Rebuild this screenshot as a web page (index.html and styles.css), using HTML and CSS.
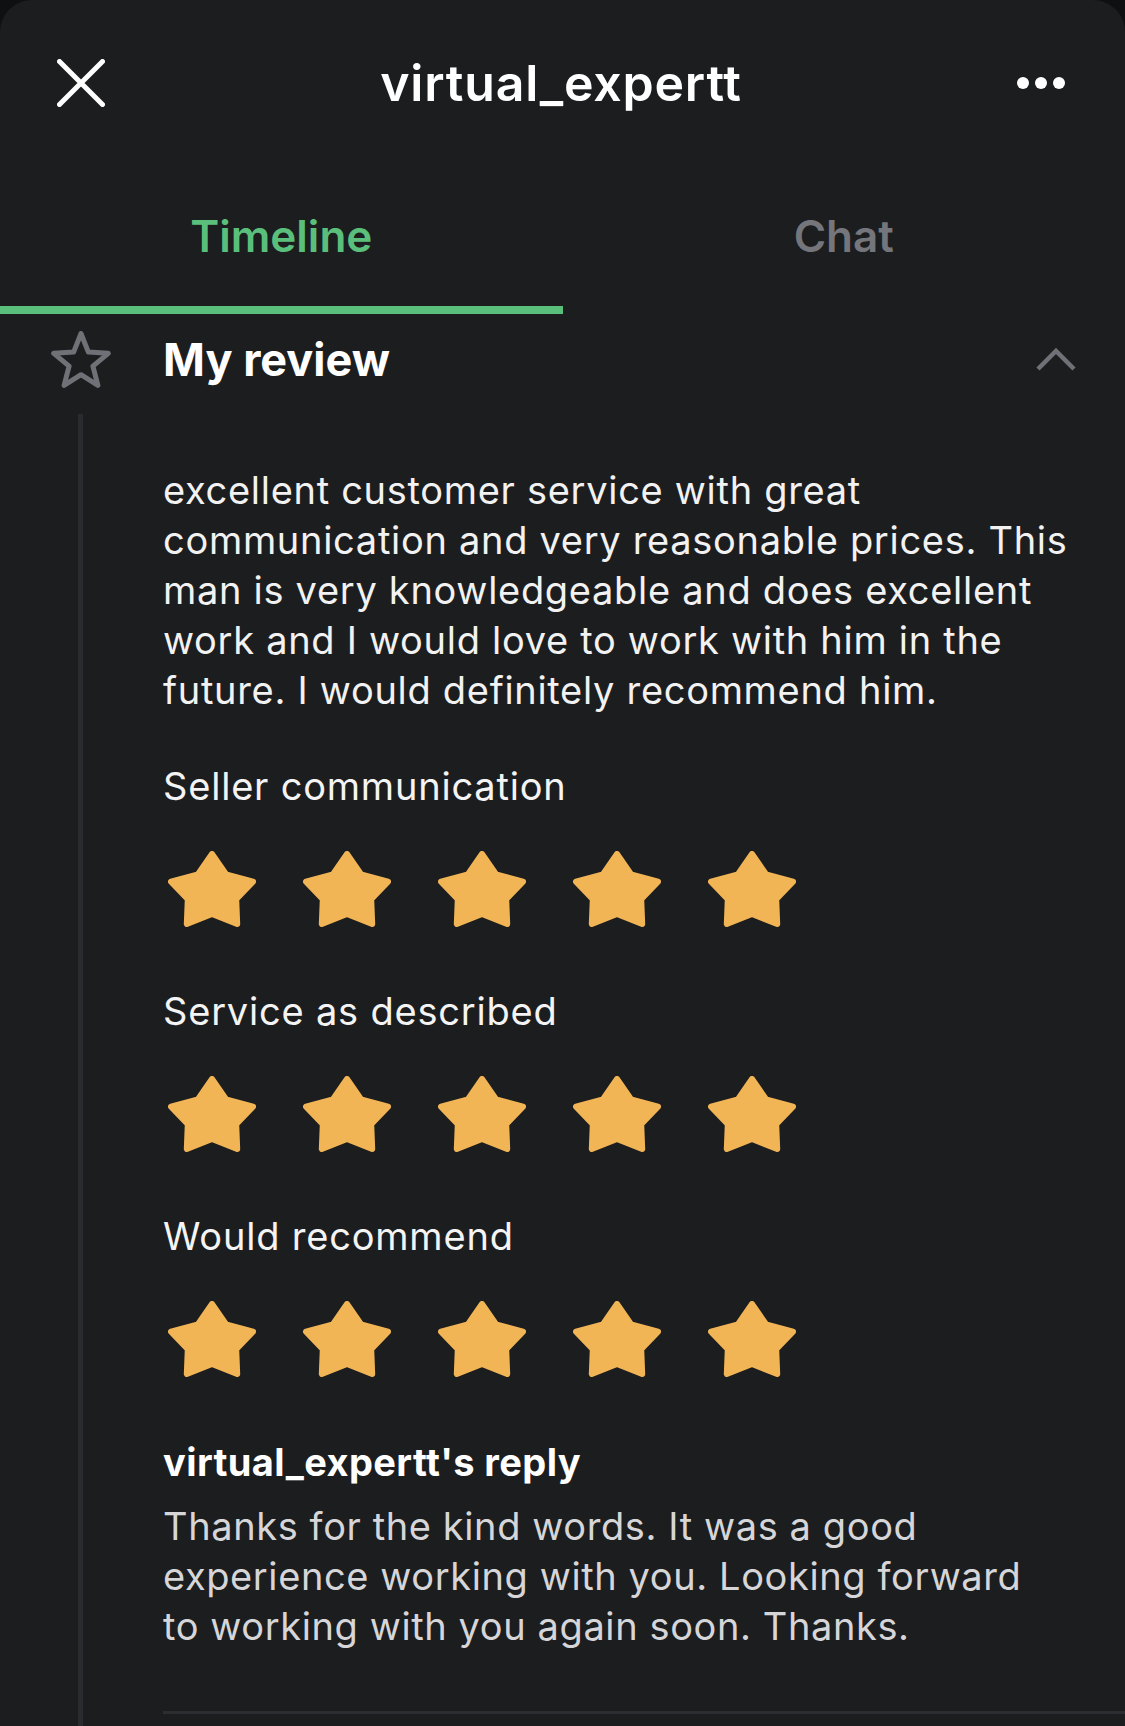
FILE: index.html
```html
<!DOCTYPE html>
<html lang="en">
<head>
<meta charset="utf-8">
<title>virtual_expertt</title>
<link rel="stylesheet" href="styles.css">
</head>
<body>
<div class="sheet">
  <header class="topbar">
    <div class="topbar-left">
      <svg class="icon-close" width="48" height="48" viewBox="0 0 48 48"><path d="M2.5 2.5 L45.5 45.5 M45.5 2.5 L2.5 45.5" stroke="#fff" stroke-width="5" stroke-linecap="round" fill="none"/></svg>
    </div>
    <h1 class="title">virtual_expertt</h1>
    <div class="topbar-right">
      <span class="dot"></span><span class="dot"></span><span class="dot"></span>
    </div>
  </header>

  <nav class="tabs">
    <div class="tab tab-active">Timeline</div>
    <div class="tab">Chat</div>
  </nav>

  <section class="item">
    <div class="item-head">
      <div class="item-icon">
        <svg width="60" height="57" viewBox="0 0 60 57"><polygon points="30,2.5 37.35,21.1 57.3,22.3 41.9,35.1 46.9,54.4 30,43.7 13.1,54.4 18.1,35.1 2.7,22.3 22.65,21.1" fill="none" stroke="#6f7177" stroke-width="5" stroke-linejoin="round"/></svg>
      </div>
      <h2 class="item-title">My review</h2>
      <svg class="chevron" width="44" height="28" viewBox="0 0 44 28"><path d="M4 24 L22 6 L40 24" fill="none" stroke="#6f7177" stroke-width="4.5"/></svg>
    </div>
    <div class="item-body">
      <div class="rail"><div class="rail-line"></div></div>
      <div class="content">
        <p class="review-text">excellent customer service with great communication and very reasonable prices. This man is very knowledgeable and does excellent work and I would love to work with him in the future. I would definitely recommend him.</p>

        <div class="rating">
          <div class="rating-label">Seller communication</div>
          <div class="stars">
            <svg class="star" viewBox="0 0 88 76"><polygon points="44,3 58,23.3 85,30.6 68.2,48.1 69.2,73 44,62.9 18.8,73 19.8,48.1 3,30.6 30,23.3"/></svg>
            <svg class="star" viewBox="0 0 88 76"><polygon points="44,3 58,23.3 85,30.6 68.2,48.1 69.2,73 44,62.9 18.8,73 19.8,48.1 3,30.6 30,23.3"/></svg>
            <svg class="star" viewBox="0 0 88 76"><polygon points="44,3 58,23.3 85,30.6 68.2,48.1 69.2,73 44,62.9 18.8,73 19.8,48.1 3,30.6 30,23.3"/></svg>
            <svg class="star" viewBox="0 0 88 76"><polygon points="44,3 58,23.3 85,30.6 68.2,48.1 69.2,73 44,62.9 18.8,73 19.8,48.1 3,30.6 30,23.3"/></svg>
            <svg class="star" viewBox="0 0 88 76"><polygon points="44,3 58,23.3 85,30.6 68.2,48.1 69.2,73 44,62.9 18.8,73 19.8,48.1 3,30.6 30,23.3"/></svg>
          </div>
        </div>

        <div class="rating">
          <div class="rating-label">Service as described</div>
          <div class="stars">
            <svg class="star" viewBox="0 0 88 76"><polygon points="44,3 58,23.3 85,30.6 68.2,48.1 69.2,73 44,62.9 18.8,73 19.8,48.1 3,30.6 30,23.3"/></svg>
            <svg class="star" viewBox="0 0 88 76"><polygon points="44,3 58,23.3 85,30.6 68.2,48.1 69.2,73 44,62.9 18.8,73 19.8,48.1 3,30.6 30,23.3"/></svg>
            <svg class="star" viewBox="0 0 88 76"><polygon points="44,3 58,23.3 85,30.6 68.2,48.1 69.2,73 44,62.9 18.8,73 19.8,48.1 3,30.6 30,23.3"/></svg>
            <svg class="star" viewBox="0 0 88 76"><polygon points="44,3 58,23.3 85,30.6 68.2,48.1 69.2,73 44,62.9 18.8,73 19.8,48.1 3,30.6 30,23.3"/></svg>
            <svg class="star" viewBox="0 0 88 76"><polygon points="44,3 58,23.3 85,30.6 68.2,48.1 69.2,73 44,62.9 18.8,73 19.8,48.1 3,30.6 30,23.3"/></svg>
          </div>
        </div>

        <div class="rating">
          <div class="rating-label">Would recommend</div>
          <div class="stars">
            <svg class="star" viewBox="0 0 88 76"><polygon points="44,3 58,23.3 85,30.6 68.2,48.1 69.2,73 44,62.9 18.8,73 19.8,48.1 3,30.6 30,23.3"/></svg>
            <svg class="star" viewBox="0 0 88 76"><polygon points="44,3 58,23.3 85,30.6 68.2,48.1 69.2,73 44,62.9 18.8,73 19.8,48.1 3,30.6 30,23.3"/></svg>
            <svg class="star" viewBox="0 0 88 76"><polygon points="44,3 58,23.3 85,30.6 68.2,48.1 69.2,73 44,62.9 18.8,73 19.8,48.1 3,30.6 30,23.3"/></svg>
            <svg class="star" viewBox="0 0 88 76"><polygon points="44,3 58,23.3 85,30.6 68.2,48.1 69.2,73 44,62.9 18.8,73 19.8,48.1 3,30.6 30,23.3"/></svg>
            <svg class="star" viewBox="0 0 88 76"><polygon points="44,3 58,23.3 85,30.6 68.2,48.1 69.2,73 44,62.9 18.8,73 19.8,48.1 3,30.6 30,23.3"/></svg>
          </div>
        </div>

        <div class="reply">
          <h3 class="reply-title">virtual_expertt's reply</h3>
          <p class="reply-text">Thanks for the kind words. It was a good experience working with you. Looking forward to working with you again soon. Thanks.</p>
        </div>
        <div class="divider"></div>
      </div>
    </div>
  </section>
</div>
</body>
</html>
```
FILE: styles.css
```css
* { box-sizing: border-box; }
html, body {
  margin: 0;
  padding: 0;
  background: #0f1011;
}
body {
  font-family: Inter, "Open Sans", sans-serif;
  color: #f4f4f5;
}
.sheet {
  width: 1125px;
  height: 1726px;
  overflow: hidden;
  background: #1c1d1f;
  border-radius: 32px 32px 0 0;
}
.topbar {
  height: 166px;
  display: grid;
  grid-template-columns: 1fr auto 1fr;
  align-items: center;
  padding: 0 60px 0 57px;
}
.topbar-left { display: flex; align-items: center; }
.icon-close { display: block; }
.title {
  margin: 0;
  font-size: 50px;
  font-weight: 600;
  color: #fff;
  letter-spacing: 0.8px;
}
.topbar-right {
  display: flex;
  justify-content: flex-end;
  gap: 6px;
}
.dot {
  width: 12px;
  height: 12px;
  border-radius: 50%;
  background: #fff;
}
.tabs {
  display: flex;
}
.tab {
  flex: 1;
  height: 148px;
  display: flex;
  align-items: center;
  justify-content: center;
  font-size: 44px;
  font-weight: 600;
  color: #75767c;
  border-bottom: 8px solid transparent;
}
.tab-active {
  color: #5bbf7c;
  border-bottom-color: #5bbf7c;
}
.item-head {
  height: 90px;
  display: flex;
  align-items: center;
  padding-right: 47px;
}
.item-icon {
  width: 163px;
  padding-left: 51px;
  display: flex;
}
.item-title {
  flex: 1;
  margin: 0;
  font-size: 45px;
  font-weight: 700;
  color: #fff;
}
.chevron { display: block; }
.item-body {
  margin-top: 10px;
  display: flex;
}
.rail {
  width: 163px;
  flex: none;
  padding-left: 78px;
  display: flex;
}
.rail-line {
  width: 5px;
  height: 1400px;
  background: #2a2b2f;
}
.content {
  flex: 1;
}
.review-text {
  width: 930px;
  margin: 51px 0 0;
  font-size: 38px;
  line-height: 50px;
  letter-spacing: 0.7px;
  color: #f2f2f3;
}
.rating { margin-top: 46px; }
.rating + .rating { margin-top: 59px; }
.rating-label {
  font-size: 38px;
  line-height: 50px;
  letter-spacing: 0.8px;
  color: #f4f4f5;
}
.stars {
  display: flex;
  gap: 47px;
  margin-top: 40px;
  padding-left: 5px;
}
.star {
  width: 88px;
  height: 76px;
  fill: #f2b556;
  stroke: #f2b556;
  stroke-width: 6;
  stroke-linejoin: round;
}
.reply { margin-top: 60px; }
.reply-title {
  margin: 0;
  font-size: 38px;
  line-height: 50px;
  font-weight: 700;
  letter-spacing: 0.4px;
  color: #fff;
}
.reply-text {
  width: 880px;
  margin: 14px 0 0;
  font-size: 38px;
  line-height: 50px;
  letter-spacing: 0.6px;
  color: #d6d6d9;
}
.divider {
  margin-top: 60px;
  height: 3px;
  background: #2c2d31;
}
```
